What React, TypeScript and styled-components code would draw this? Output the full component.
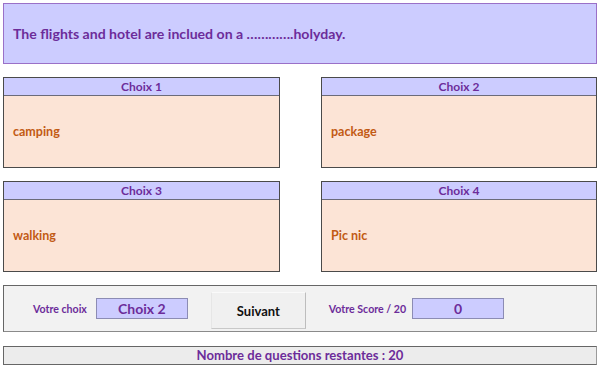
import * as React from "react";
import styled, { createGlobalStyle } from "styled-components";

const choices = [
  { title: "Choix 1", text: "camping" },
  { title: "Choix 2", text: "package" },
  { title: "Choix 3", text: "walking" },
  { title: "Choix 4", text: "Pic nic" },
];

export default () => {
  return (
    <>
      <GlobalStyle />
      <Root>
        <Question>The flights and hotel are inclued on a ………….holyday.</Question>
        <Grid>
          {choices.map((c) => (
            <Card key={c.title}>
              <CardTitle>{c.title}</CardTitle>
              <CardBody>{c.text}</CardBody>
            </Card>
          ))}
        </Grid>
        <Panel>
          <Label>Votre choix</Label>
          <ValueBox>Choix 2</ValueBox>
          <NextButton>Suivant</NextButton>
          <Label>Votre Score / 20</Label>
          <ValueBox $narrowGap>0</ValueBox>
        </Panel>
        <StatusBar>Nombre de questions restantes : 20</StatusBar>
      </Root>
    </>
  );
};

// ----------------------------------------------------------------------------

const purple = "#6c2c9a";

const GlobalStyle = createGlobalStyle`
  body {
    margin: 0;
    background: white;
    font-family: Lato, "Open Sans", sans-serif;
  }
`;

const Root = styled.div`
  width: 594px;
  padding: 3px;
  display: flex;
  flex-direction: column;
`;

const Question = styled.div`
  height: 59px;
  background: #ccccff;
  border: 1px solid #9a70c8;
  display: flex;
  align-items: center;
  padding-left: 9px;
  color: ${purple};
  font-weight: bold;
  font-size: 14.1px;
  margin-bottom: 13px;
`;

const Grid = styled.div`
  display: grid;
  grid-template-columns: 277px 276px;
  column-gap: 41px;
  row-gap: 13px;
  margin-bottom: 13px;
`;

const Card = styled.div`
  height: 89px;
  border: 1px solid #4a4a4a;
  background: #fce4d6;
  display: flex;
  flex-direction: column;
`;

const CardTitle = styled.div`
  height: 17px;
  background: #ccccff;
  border-bottom: 1px solid #6b6b7a;
  color: ${purple};
  font-weight: bold;
  font-size: 12px;
  text-align: center;
  line-height: 18px;
`;

const CardBody = styled.div`
  flex: 1;
  display: flex;
  align-items: center;
  padding-left: 9px;
  color: #c25a14;
  font-weight: bold;
  font-size: 12.5px;
`;

const Panel = styled.div`
  height: 45px;
  background: #f2f2f2;
  border: 1px solid #666;
  border-right-color: #9a9a9a;
  border-bottom-color: #8a8a8a;
  display: flex;
  align-items: center;
  padding-left: 29px;
  margin-bottom: 14px;
`;

const Label = styled.div`
  color: ${purple};
  font-weight: bold;
  font-size: 10.6px;
`;

const ValueBox = styled.div<{ $narrowGap?: boolean }>`
  width: 90px;
  height: 19px;
  margin-left: ${(p) => (p.$narrowGap ? 6 : 9)}px;
  background: #ccccff;
  border: 1px solid #8c8cb4;
  color: ${purple};
  font-weight: bold;
  font-size: 14px;
  line-height: 19px;
  text-align: center;
`;

const NextButton = styled.div`
  width: 93px;
  height: 35px;
  margin: 4px 23px 0 23px;
  background: #f0f0f0;
  border-top: 1px solid #fafafa;
  border-left: 1px solid #e6e6e6;
  border-right: 1px solid #bdbdbd;
  border-bottom: 1px solid #c8c8c8;
  display: flex;
  align-items: center;
  justify-content: center;
  color: #111;
  font-weight: bold;
  font-size: 13px;
`;

const StatusBar = styled.div`
  height: 17px;
  background: #ececec;
  border: 1px solid #666;
  border-right-color: #9a9a9a;
  color: ${purple};
  font-weight: bold;
  font-size: 13.1px;
  line-height: 17px;
  text-align: center;
`;
